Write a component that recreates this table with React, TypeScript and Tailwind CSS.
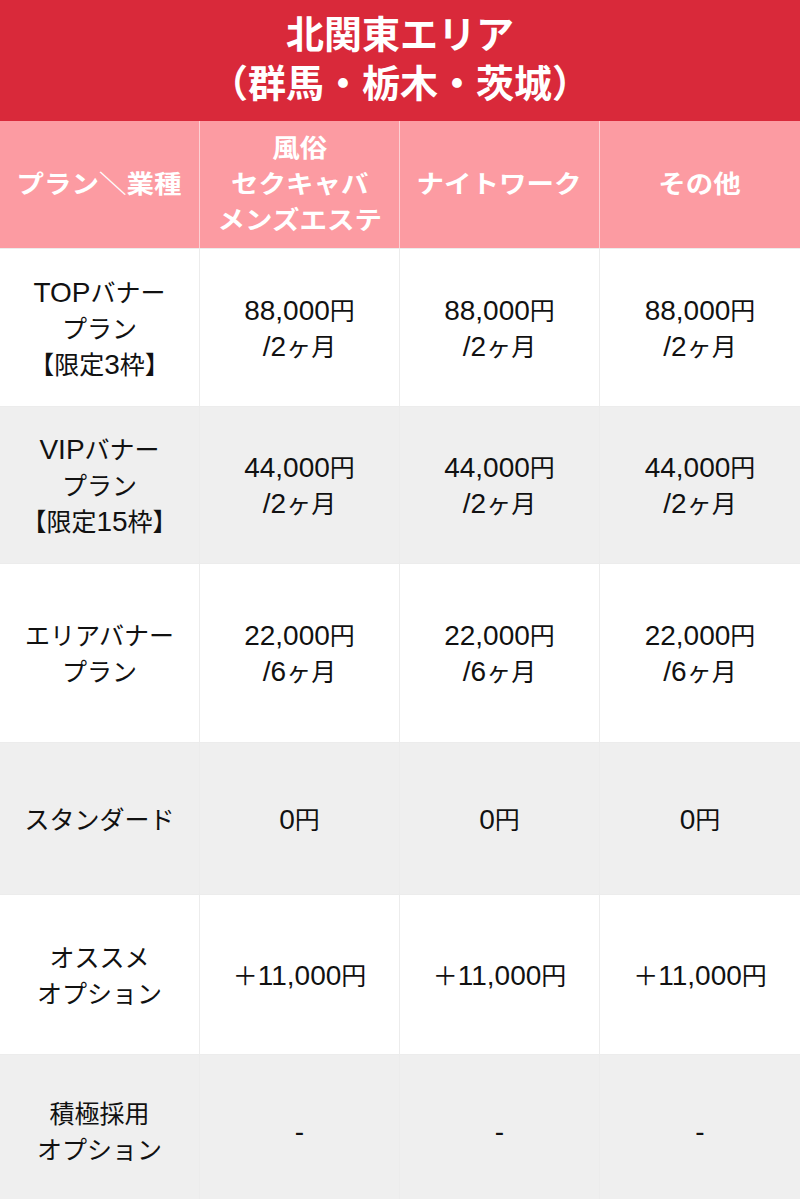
import React from "react";

const font = { fontFamily: '"Liberation Sans", "Noto Sans CJK JP", sans-serif' };

type Row = { label: string[]; values: string[][]; h: string; bg: string };

const rows: Row[] = [
  { label: ["TOPバナー", "プラン", "【限定3枠】"], values: [["88,000円", "/2ヶ月"], ["88,000円", "/2ヶ月"], ["88,000円", "/2ヶ月"]], h: "h-[158px]", bg: "bg-white" },
  { label: ["VIPバナー", "プラン", "【限定15枠】"], values: [["44,000円", "/2ヶ月"], ["44,000円", "/2ヶ月"], ["44,000円", "/2ヶ月"]], h: "h-[157px]", bg: "bg-[#efefef]" },
  { label: ["エリアバナー", "プラン"], values: [["22,000円", "/6ヶ月"], ["22,000円", "/6ヶ月"], ["22,000円", "/6ヶ月"]], h: "h-[179px]", bg: "bg-white" },
  { label: ["スタンダード"], values: [["0円"], ["0円"], ["0円"]], h: "h-[152px]", bg: "bg-[#efefef]" },
  { label: ["オススメ", "オプション"], values: [["＋11,000円"], ["＋11,000円"], ["＋11,000円"]], h: "h-[160px]", bg: "bg-white" },
  { label: ["積極採用", "オプション"], values: [["-"], ["-"], ["-"]], h: "h-[152px]", bg: "bg-[#efefef]" },
];

const headers: string[][] = [
  ["プラン＼業種"],
  ["風俗", "セクキャバ", "メンズエステ"],
  ["ナイトワーク"],
  ["その他"],
];

function Mixed({ text }: { text: string }) {
  const parts = text.split(/([A-Za-z0-9,\/\-]+)/);
  return (
    <>
      {parts.map((p, i) =>
        /^[A-Za-z0-9,\/\-]+$/.test(p) ? (
          <span key={i} className="text-[28px]">
            {p}
          </span>
        ) : (
          <span key={i}>{p}</span>
        )
      )}
    </>
  );
}

function Lines({ lines }: { lines: string[] }) {
  return (
    <div className="flex flex-col items-center">
      {lines.map((l, i) => (
        <span key={i} className="block whitespace-nowrap h-[36px]">
          <Mixed text={l} />
        </span>
      ))}
    </div>
  );
}

export default function App() {
  return (
    <div className="w-[800px] h-[1199px] overflow-hidden bg-white" style={font}>
      <div className="h-[121px] bg-[#d9293a] flex flex-col items-center justify-center pb-[2px] text-white font-bold text-[38px] leading-[49px]">
        <span className="whitespace-nowrap">北関東エリア</span>
        <span className="whitespace-nowrap">（群馬・栃木・茨城）</span>
      </div>
      <div className="grid grid-cols-4 h-[127px] bg-[#fc9ba2]">
        {headers.map((h, i) => (
          <div
            key={i}
            className={`flex items-center justify-center text-white font-bold text-[25px] leading-[36px] pb-[2px] ${i < 3 ? "border-r border-[#fdd0d3]" : ""}`}
          >
            <div className="flex flex-col items-center scale-x-[1.1]">
              {h.map((l, j) => (
                <span key={j} className="block whitespace-nowrap">
                  {l}
                </span>
              ))}
            </div>
          </div>
        ))}
      </div>
      {rows.map((r, i) => (
        <div key={i} className={`grid grid-cols-4 ${r.h} ${r.bg} border-t border-[#ececec] text-[#111] text-[25px] leading-[36px]`}>
          <div className="flex items-center justify-center text-center border-r border-[#ececec] pt-[2px]">
            <Lines lines={r.label} />
          </div>
          {r.values.map((v, j) => (
            <div
              key={j}
              className={`flex items-center justify-center text-center pt-[2px] ${j < 2 ? "border-r border-[#ececec]" : ""}`}
            >
              <Lines lines={v} />
            </div>
          ))}
        </div>
      ))}
    </div>
  );
}
